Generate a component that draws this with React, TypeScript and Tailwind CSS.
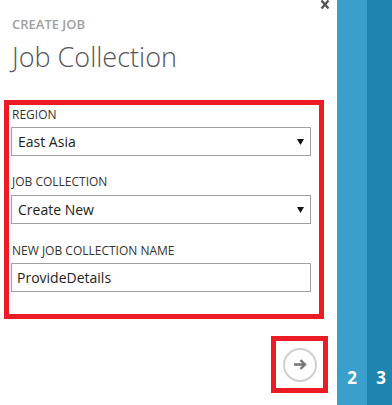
import React from 'react';

// Create Job wizard - step 1 (Job Collection)

function Caret() {
  return (
    <svg width="7" height="6" viewBox="0 0 7 6" className="block">
      <polygon points="0,0 7,0 3.5,6" fill="#111" />
    </svg>
  );
}

function FieldLabel({ children, className = '' }: { children: React.ReactNode; className?: string }) {
  return (
    <div className={`pl-[1px] text-[12px] leading-[12px] text-[#333] ${className}`}>{children}</div>
  );
}

function SelectBox({ value, className = '' }: { value: string; className?: string }) {
  return (
    <div
      className={`flex h-[29px] w-[300px] items-center justify-between border border-[#a0a0a0] bg-white pl-[6px] pr-[6px] text-[14px] text-[#222] ${className}`}
    >
      <span>{value}</span>
      <Caret />
    </div>
  );
}

export default function App() {
  return (
    <div className="flex h-[405px] w-[392px] overflow-hidden bg-white" style={{ fontFamily: '"Open Sans", "Noto Sans", sans-serif' }}>
      <div className="relative w-[337px] bg-white">
        <svg width="10" height="10" viewBox="0 0 10 10" className="absolute right-[7px] top-0">
          <path d="M1.5 0.5 L8.5 8.5 M8.5 0.5 L1.5 8.5" stroke="#555" strokeWidth="2.4" />
        </svg>

        <div className="pl-[12px] pt-[18px]">
          <div className="text-[13px] font-semibold leading-[13px] text-[#a0a0a0]">CREATE JOB</div>
          <div className="mt-[12px] text-[27px] font-light leading-[27px] text-[#555]">Job Collection</div>
        </div>

        <div className="ml-[4px] mt-[30px] h-[219px] w-[320px] border-[5px] border-[#ed1c24] px-[2px]">
          <FieldLabel className="mt-[4px]">REGION</FieldLabel>
          <SelectBox value="East Asia" className="mt-[6px]" />

          <FieldLabel className="mt-[20px]">JOB COLLECTION</FieldLabel>
          <SelectBox value="Create New" className="mt-[7px]" />

          <FieldLabel className="mt-[21px]">NEW JOB COLLECTION NAME</FieldLabel>
          <div className="mt-[6px] flex h-[29px] w-[300px] items-center border border-[#a0a0a0] pl-[5px] text-[14px] text-[#222]">
            ProvideDetails
          </div>
        </div>

        <div className="ml-[271px] mt-[17px] flex h-[57px] w-[57px] items-center justify-center border-[5px] border-[#ed1c24]">
          <div className="flex h-[34px] w-[34px] items-center justify-center rounded-full border-2 border-[#cfcfcf]">
            <svg width="14" height="11" viewBox="0 0 14 11">
              <path d="M1 5.5 H12 M7.5 1 L12 5.5 L7.5 10" stroke="#777" strokeWidth="2.4" fill="none" />
            </svg>
          </div>
        </div>
      </div>

      <div className="flex w-[30px] flex-col items-center justify-end bg-[#3a9fcb] pb-[19px]">
        <span className="text-[17px] font-bold leading-[17px] text-white">2</span>
      </div>
      <div className="flex flex-1 flex-col items-center justify-end bg-[#1f84b0] pb-[19px] pl-[3px]">
        <span className="text-[17px] font-bold leading-[17px] text-white">3</span>
      </div>
    </div>
  );
}
